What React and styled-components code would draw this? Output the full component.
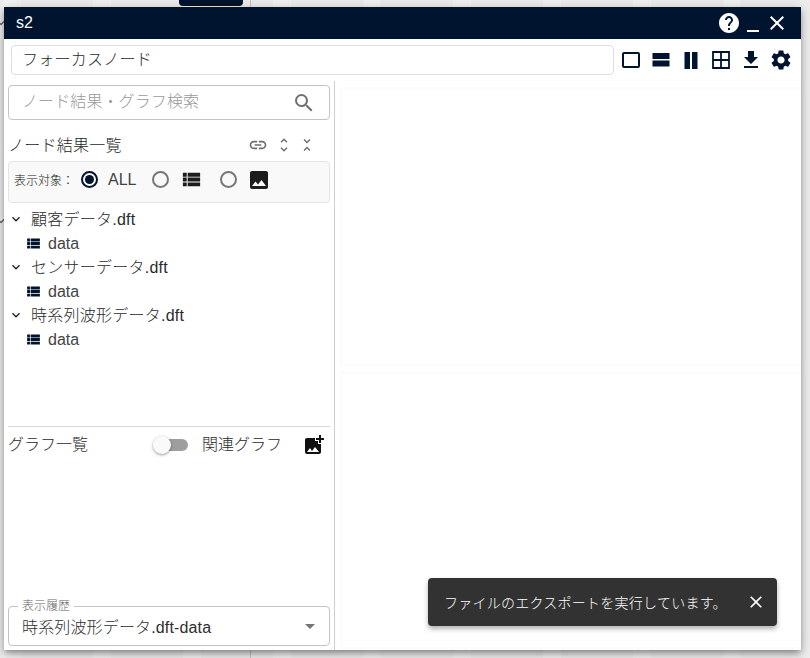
import React from 'react';
import styled, { createGlobalStyle } from 'styled-components';
import { MdHelp, MdClose, MdSearch, MdLink, MdUnfoldMore, MdUnfoldLess, MdViewList, MdImage, MdExpandMore, MdFileDownload, MdSettings, MdAddPhotoAlternate, MdArrowDropDown } from 'react-icons/md';

const navy = '#00132f';
const font = `"Liberation Sans", "Noto Sans CJK JP", sans-serif`;

const GlobalStyle = createGlobalStyle`
  html, body {
    margin: 0;
    padding: 0;
    height: 100%;
    overflow: hidden;
    background: #f1f1f1;
    font-family: ${font};
    font-weight: 300;
  }
`;

const Desktop = styled.div`
  position: relative;
  width: 810px;
  height: 658px;
  overflow: hidden;
  background: repeating-linear-gradient(90deg, #ededed 0 72px, #f2f2f2 72px 90px) 291px 0;
`;

const BackTab = styled.div`
  position: absolute;
  left: 179px;
  top: 0;
  width: 64px;
  height: 6px;
  background: ${navy};
  border-radius: 0 0 4px 4px;
`;

const BackLine = styled.div`
  position: absolute;
  left: 250px;
  top: 0;
  width: 1px;
  height: 658px;
  background: #c4c4c4;
`;

const BackChevron = styled(MdExpandMore)`
  position: absolute;
  left: -6px;
  top: ${p => p.$top}px;
  color: #444;
`;

const Window = styled.div`
  position: absolute;
  left: 4px;
  top: 7px;
  width: 797px;
  height: 643px;
  background: #fff;
  display: flex;
  flex-direction: column;
  box-shadow: 0 3px 5px -1px rgba(0, 0, 0, 0.25), 0 5px 8px rgba(0, 0, 0, 0.18), 0 1px 14px rgba(0, 0, 0, 0.14);
`;

const TitleBar = styled.div`
  height: 32px;
  background: ${navy};
  color: #fff;
  display: flex;
  align-items: center;
  padding: 0 12px;
  font-size: 16px;
  flex: none;
`;

const TitleText = styled.div`
  flex: 1;
`;

const TitleIcons = styled.div`
  display: flex;
  align-items: center;
`;

const Minimize = styled.div`
  width: 12px;
  height: 2px;
  background: #fff;
  margin: 16px 6px 0;
`;

const FocusRow = styled.div`
  display: flex;
  align-items: center;
  height: 42px;
  padding: 0 8px 0 7px;
  flex: none;
`;

const FocusBox = styled.div`
  width: 603px;
  height: 30px;
  box-sizing: border-box;
  border: 1px solid #dedede;
  border-radius: 4px;
  padding: 0 10px 4px;
  display: flex;
  align-items: center;
  font-size: 16px;
  letter-spacing: 0.25px;
  color: #2a2a2a;
`;

const ViewIcons = styled.div`
  display: flex;
  align-items: center;
  margin-left: 5px;
  gap: 6px;
  color: ${navy};
`;

const Main = styled.div`
  flex: 1;
  display: flex;
  min-height: 0;
`;

const Side = styled.div`
  width: 331px;
  box-sizing: border-box;
  border-right: 1px solid #cfcfcf;
  display: flex;
  flex-direction: column;
  padding: 4px 0 4px 4px;
  flex: none;
`;

const SearchBox = styled.div`
  width: 322px;
  height: 35px;
  box-sizing: border-box;
  border: 1px solid #c4c4c4;
  border-radius: 4px;
  display: flex;
  align-items: center;
  padding: 0 13px;
  font-size: 16px;
  color: #999;
  justify-content: space-between;
  flex: none;
  svg { color: #707070; }
`;

const SearchText = styled.span`
  padding-bottom: 5px;
  letter-spacing: 0.1px;
`;

const ListHeader = styled.div`
  display: flex;
  align-items: center;
  justify-content: space-between;
  height: 26px;
  margin: 12px 0 3px;
  font-size: 16px;
  color: #1e1e1e;
  width: 322px;
  flex: none;
`;

const ListTitle = styled.span`
  padding-bottom: 2px;
  letter-spacing: 0.25px;
`;

const HeaderIcons = styled.div`
  display: flex;
  align-items: center;
  gap: 5px;
  padding-right: 14px;
  color: #6e6e6e;
`;

const LinkIcon = styled(MdLink)`
  margin-right: 2px;
`;

const FilterBar = styled.div`
  width: 322px;
  height: 42px;
  box-sizing: border-box;
  background: #f9f9f9;
  border: 1px solid #e4e4e4;
  border-radius: 4px;
  display: flex;
  align-items: center;
  padding: 0 0 5px 5px;
  font-size: 12px;
  color: #222;
  flex: none;
`;

const Radio = styled.span`
  width: 17px;
  height: 17px;
  box-sizing: border-box;
  border-radius: 50%;
  border: 2px solid ${p => (p.$on ? navy : '#777')};
  display: inline-flex;
  align-items: center;
  justify-content: center;
  margin-left: ${p => p.$left}px;
  flex: none;
  &::after {
    content: '';
    width: 9px;
    height: 9px;
    border-radius: 50%;
    background: ${p => (p.$on ? navy : 'transparent')};
  }
`;

const AllLabel = styled.span`
  font-size: 16px;
  color: #444;
  margin-left: 10px;
`;

const FilterList = styled(MdViewList)`
  margin-left: 11px;
  color: #1c1c1c;
`;

const FilterImage = styled(MdImage)`
  margin-left: 10px;
  color: #1c1c1c;
`;

const Tree = styled.div`
  margin-top: 4px;
  height: 219px;
  flex: none;
`;

const FileRow = styled.div`
  height: 24px;
  display: flex;
  align-items: center;
  font-size: 16px;
  color: #2a2a2a;
  gap: 7px;
  svg { color: #222; }
`;

const FileName = styled.span`
  padding-bottom: 2px;
  letter-spacing: 0.25px;
`;

const DataRow = styled.div`
  height: 24px;
  display: flex;
  align-items: center;
  font-size: 16px;
  color: #444;
  gap: 6px;
  padding-left: 17px;
  svg { color: ${navy}; }
`;

const DataName = styled.span`
  padding-top: 2px;
`;

const GraphHeader = styled.div`
  width: 322px;
  height: 36px;
  box-sizing: border-box;
  border-top: 1px solid #d8d8d8;
  display: flex;
  align-items: center;
  font-size: 16px;
  color: #2a2a2a;
  flex: none;
`;

const GraphLabel = styled.span`
  padding-bottom: 4px;
  flex: ${p => (p.$grow ? 1 : 'none')};
`;

const Switch = styled.div`
  position: relative;
  width: 34px;
  height: 12px;
  border-radius: 6px;
  background: #9e9e9e;
  margin-right: 14px;
  &::after {
    content: '';
    position: absolute;
    left: -1px;
    top: -3px;
    width: 18px;
    height: 18px;
    border-radius: 50%;
    background: #fafafa;
    box-shadow: 0 1px 3px rgba(0, 0, 0, 0.4);
  }
`;

const AddGraph = styled(MdAddPhotoAlternate)`
  margin: 0 4px 0 20px;
  color: #111;
`;

const GraphSpace = styled.div`
  flex: 1;
`;

const HistoryBox = styled.div`
  position: relative;
  width: 322px;
  height: 40px;
  box-sizing: border-box;
  border: 1px solid #c4c4c4;
  border-radius: 4px;
  padding: 0 7px 0 13px;
  display: flex;
  align-items: center;
  justify-content: space-between;
  font-size: 16px;
  letter-spacing: 0.15px;
  color: #2e2e2e;
  flex: none;
  svg { color: #757575; }
`;

const HistoryLabel = styled.span`
  position: absolute;
  left: 9px;
  top: -7px;
  padding: 0 4px;
  background: #fff;
  font-size: 12px;
  line-height: 12px;
  letter-spacing: 0;
  color: #666;
`;

const Stage = styled.div`
  flex: 1;
  display: grid;
  grid-template-rows: 1fr 1fr;
  gap: 5px;
  padding: 6px 0 0 5px;
`;

const Pane = styled.div`
  border: 3px solid #fcfcfc;
  border-right: 0;
`;

const Toast = styled.div`
  position: absolute;
  left: 428px;
  top: 578px;
  width: 349px;
  height: 48px;
  box-sizing: border-box;
  background: #323232;
  color: #fff;
  border-radius: 4px;
  padding: 0 11px 0 16px;
  display: flex;
  align-items: center;
  justify-content: space-between;
  font-size: 14px;
  letter-spacing: 0.25px;
  box-shadow: 0 3px 5px rgba(0, 0, 0, 0.3);
`;

const Glyph = ({ children }) => (
  <svg width="24" height="24" viewBox="0 0 24 24" fill="currentColor">{children}</svg>
);

const files = ['顧客データ.dft', 'センサーデータ.dft', '時系列波形データ.dft'];

export default function App() {
  return (
    <>
      <GlobalStyle />
      <Desktop>
        <BackTab />
        <BackLine />
        <BackChevron size={14} $top={16} />
        <BackChevron size={14} $top={214} />
        <Window>
          <TitleBar>
            <TitleText>s2</TitleText>
            <TitleIcons>
              <MdHelp size={24} />
              <Minimize />
              <MdClose size={24} />
            </TitleIcons>
          </TitleBar>
          <FocusRow>
            <FocusBox>フォーカスノード</FocusBox>
            <ViewIcons>
              <Glyph>
                <rect x="4" y="5" width="16" height="14" rx="1" fill="none" stroke="currentColor" strokeWidth="2" />
              </Glyph>
              <Glyph>
                <rect x="3.5" y="5" width="17" height="6" />
                <rect x="3.5" y="12.5" width="17" height="6" />
              </Glyph>
              <Glyph>
                <rect x="5.5" y="4" width="5.5" height="17" />
                <rect x="13" y="4" width="5.5" height="17" />
              </Glyph>
              <Glyph>
                <path d="M4 4h16v16H4zM12 4v16M4 12h16" fill="none" stroke="currentColor" strokeWidth="1.8" />
              </Glyph>
              <MdFileDownload size={24} />
              <MdSettings size={24} />
            </ViewIcons>
          </FocusRow>
          <Main>
            <Side>
              <SearchBox>
                <SearchText>ノード結果・グラフ検索</SearchText>
                <MdSearch size={24} />
              </SearchBox>
              <ListHeader>
                <ListTitle>ノード結果一覧</ListTitle>
                <HeaderIcons>
                  <LinkIcon size={20} />
                  <MdUnfoldMore size={18} />
                  <MdUnfoldLess size={18} />
                </HeaderIcons>
              </ListHeader>
              <FilterBar>
                表示対象：
                <Radio $on $left={7} />
                <AllLabel>ALL</AllLabel>
                <Radio $left={16} />
                <FilterList size={23} />
                <Radio $left={17} />
                <FilterImage size={24} />
              </FilterBar>
              <Tree>
                {files.map(name => (
                  <React.Fragment key={name}>
                    <FileRow>
                      <MdExpandMore size={16} />
                      <FileName>{name}</FileName>
                    </FileRow>
                    <DataRow>
                      <MdViewList size={17} />
                      <DataName>data</DataName>
                    </DataRow>
                  </React.Fragment>
                ))}
              </Tree>
              <GraphHeader>
                <GraphLabel $grow>グラフ一覧</GraphLabel>
                <Switch />
                <GraphLabel>関連グラフ</GraphLabel>
                <AddGraph size={24} />
              </GraphHeader>
              <GraphSpace />
              <HistoryBox>
                <HistoryLabel>表示履歴</HistoryLabel>
                時系列波形データ.dft-data
                <MdArrowDropDown size={24} />
              </HistoryBox>
            </Side>
            <Stage>
              <Pane />
              <Pane />
            </Stage>
          </Main>
        </Window>
        <Toast>
          ファイルのエクスポートを実行しています。
          <MdClose size={20} />
        </Toast>
      </Desktop>
    </>
  );
}
